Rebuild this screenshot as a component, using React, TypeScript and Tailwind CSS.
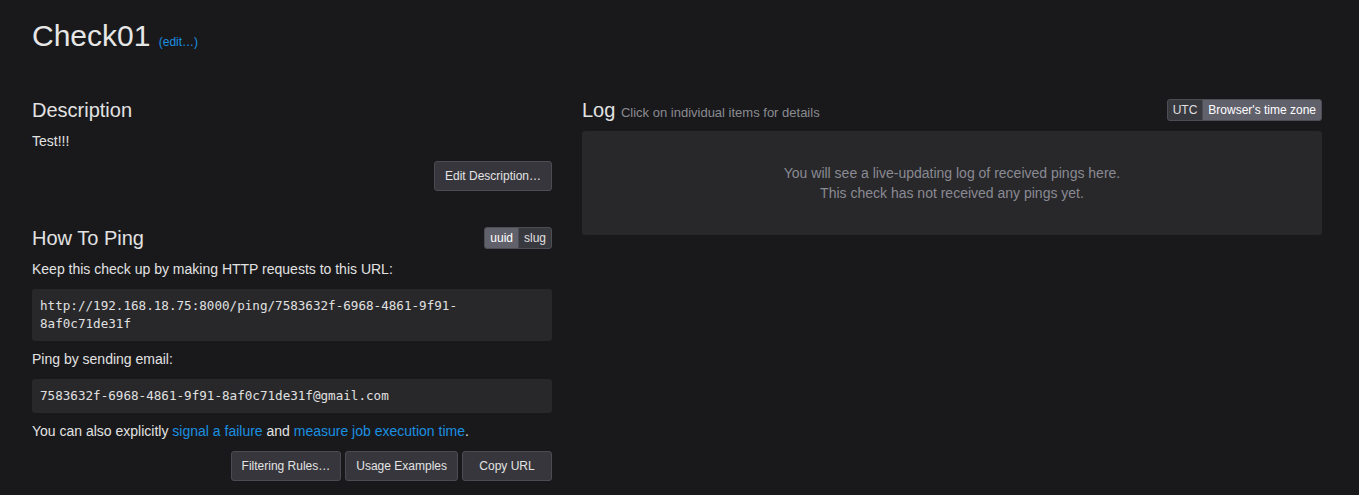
import React from "react";

function Btn({ children, className = "" }: { children: React.ReactNode; className?: string }) {
  return (
    <button
      className={
        "inline-flex items-center justify-center h-[30px] px-[10px] text-[12px] leading-[18px] bg-[#36363c] border border-[#4b4b53] rounded-[3px] text-[#e3e3e3] " +
        className
      }
    >
      {children}
    </button>
  );
}

function Toggle({ items, active }: { items: string[]; active: number }) {
  return (
    <div className="inline-flex">
      {items.map((it, i) => (
        <span
          key={it}
          className={
            "h-[22px] px-[5px] text-[12px] leading-[20px] border border-[#4d4d55] " +
            (i === 0 ? "rounded-l-[3px] " : "rounded-r-[3px] -ml-px ") +
            (i === active ? "bg-[#61616c] text-white" : "bg-[#38383f] text-[#e0e0e0]")
          }
        >
          {it}
        </span>
      ))}
    </div>
  );
}

export default function App() {
  return (
    <div className="min-h-screen bg-[#19191c] text-[#e2e2e2] font-['Liberation_Sans',Arial,sans-serif] text-[14px] leading-[20px]">
      <div className="pl-[32px] pt-[19px]">
        <h1 className="text-[30px] leading-[33px] font-normal text-[#e6e6e6]">
          Check01{" "}
          <span className="text-[12px] leading-none text-[#1a90e0]">(edit…)</span>
        </h1>
        <div className="flex gap-[30px] mt-[47px]">
          <div className="w-[520px]">
            <h2 className="text-[20px] leading-[22px] font-normal">Description</h2>
            <p className="mt-[10px]">Test!!!</p>
            <div className="flex justify-end mt-[10px]">
              <Btn>Edit Description…</Btn>
            </div>
            <div className="flex justify-between items-start mt-[36px]">
              <h2 className="text-[20px] leading-[22px] font-normal">How To Ping</h2>
              <Toggle items={["uuid", "slug"]} active={0} />
            </div>
            <p className="mt-[10px]">Keep this check up by making HTTP requests to this URL:</p>
            <pre className="mt-[10px] bg-[#28282b] rounded-[3px] px-[8px] py-[8px] font-['DejaVu_Sans_Mono',monospace] text-[12.6px] leading-[18px] text-[#e0e0e0] whitespace-pre-wrap">
              http://192.168.18.75:8000/ping/7583632f-6968-4861-9f91-
              <br />
              8af0c71de31f
            </pre>
            <p className="mt-[8px]">Ping by sending email:</p>
            <pre className="mt-[10px] bg-[#28282b] rounded-[3px] px-[8px] py-[8px] font-['DejaVu_Sans_Mono',monospace] text-[12.6px] leading-[18px] text-[#e0e0e0]">
              7583632f-6968-4861-9f91-8af0c71de31f@gmail.com
            </pre>
            <p className="mt-[8px]">
              You can also explicitly <span className="text-[#1a90e0]">signal a failure</span> and{" "}
              <span className="text-[#1a90e0]">measure job execution time</span>.
            </p>
            <div className="flex justify-end gap-[4px] mt-[10px]">
              <Btn>Filtering Rules…</Btn>
              <Btn>Usage Examples</Btn>
              <Btn className="w-[90px]">Copy URL</Btn>
            </div>
          </div>
          <div className="w-[740px]">
            <div className="flex justify-between items-start">
              <h2 className="text-[20px] leading-[22px] font-normal">
                Log{" "}
                <span className="text-[13px] leading-none text-[#8b8b90]">
                  Click on individual items for details
                </span>
              </h2>
              <Toggle items={["UTC", "Browser's time zone"]} active={1} />
            </div>
            <div className="mt-[10px] bg-[#28282b] rounded-[3px] p-[32px] text-center text-[#8a8a92]">
              You will see a live-updating log of received pings here.
              <br />
              This check has not received any pings yet.
            </div>
          </div>
        </div>
      </div>
    </div>
  );
}
